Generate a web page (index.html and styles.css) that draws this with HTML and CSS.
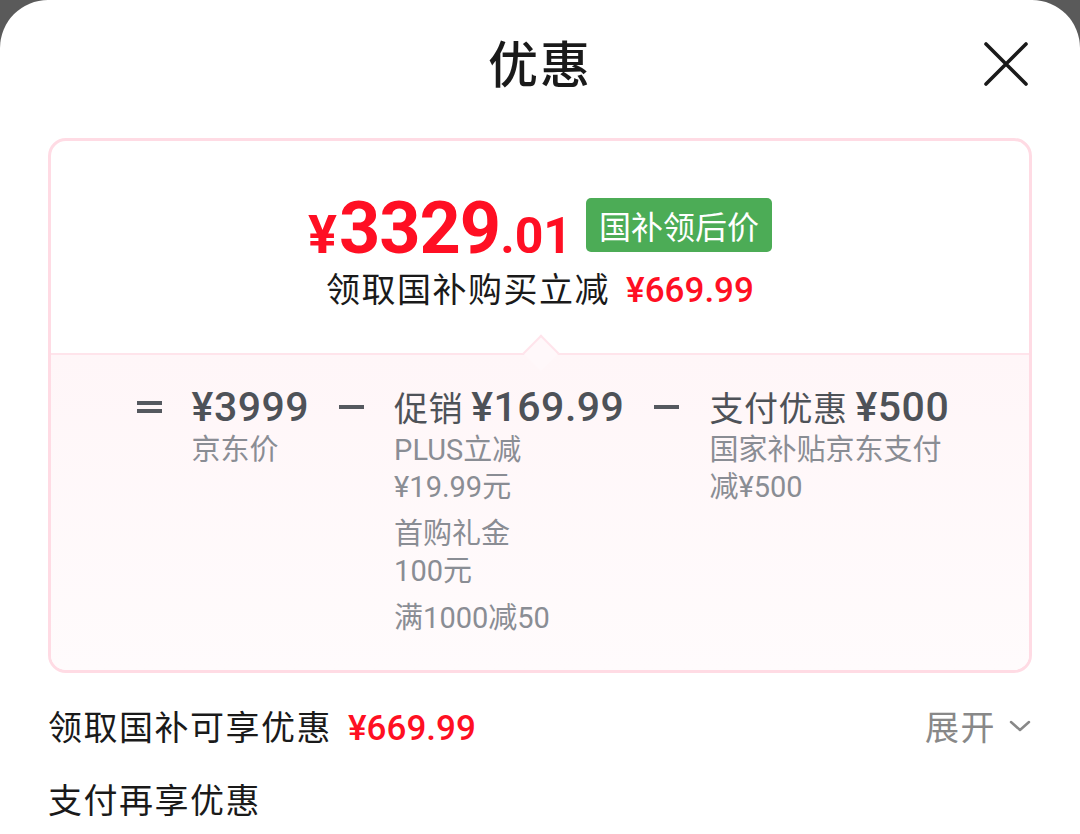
FILE: index.html
```html
<!DOCTYPE html>
<html lang="zh-CN">
<head>
    <meta charset="UTF-8">
    <meta name="viewport" content="width=device-width, initial-scale=1.0">
    <title>优惠</title>
    <link rel="stylesheet" href="styles.css">
</head>
<body>
    <div class="sheet">
        <div class="header">
            <h1>优惠</h1>
            <span class="close">
                <svg width="46" height="46" viewBox="0 0 46 46"><path d="M3 3 L43 43 M43 3 L3 43" stroke="#1a1a1a" stroke-width="3.6" stroke-linecap="round"/></svg>
            </span>
        </div>

        <div class="card">
            <div class="card-top">
                <div class="final-row">
                    <span class="final-price"><span class="yen">¥</span><span class="int">3329</span><span class="dec">.01</span></span>
                    <span class="badge">国补领后价</span>
                </div>
                <p class="saving">领取国补购买立减<span class="red">¥669.99</span></p>
            </div>
            <div class="card-bottom">
                <div class="op"><span class="eq"></span></div>
                <div class="col">
                    <div class="col-title"><span class="num">¥3999</span></div>
                    <div class="col-sub">京东价</div>
                </div>
                <div class="op"><span class="minus"></span></div>
                <div class="col">
                    <div class="col-title">促销 <span class="num">¥169.99</span></div>
                    <div class="col-sub narrow">PLUS立减¥19.99元</div>
                    <div class="col-sub narrow">首购礼金100元</div>
                    <div class="col-sub narrow">满1000减50</div>
                </div>
                <div class="op"><span class="minus"></span></div>
                <div class="col">
                    <div class="col-title">支付优惠 <span class="num">¥500</span></div>
                    <div class="col-sub wide">国家补贴京东支付减¥500</div>
                </div>
            </div>
        </div>

        <div class="row first">
            <span>领取国补可享优惠<span class="red">¥669.99</span></span>
            <span class="more">展开
                <svg width="24" height="14" viewBox="0 0 24 14"><path d="M3 3 L12 11 L21 3" fill="none" stroke="#888" stroke-width="2.5" stroke-linecap="round" stroke-linejoin="round"/></svg>
            </span>
        </div>
        <div class="row">
            <span>支付再享优惠</span>
        </div>
    </div>
</body>
</html>
```

FILE: styles.css
```css
body {
    margin: 0;
    background-color: #5a5a5a;
    font-family: "Noto Sans CJK SC", sans-serif;
    color: #1a1a1a;
}
.sheet {
    background-color: white;
    border-radius: 48px 48px 0 0;
    height: 834px;
    overflow: hidden;
    padding: 0 48px;
}
.header {
    position: relative;
    height: 130px;
    display: flex;
    align-items: center;
    justify-content: center;
}
.header h1 {
    margin: 0;
    font-size: 50px;
    font-weight: 500;
    letter-spacing: 2px;
    line-height: 1;
    margin-top: -8px;
}
.close {
    position: absolute;
    right: 3px;
    top: 41px;
    display: flex;
}
.card {
    border: 3px solid #ffdbe4;
    border-radius: 18px;
    overflow: hidden;
    margin-top: 8px;
}
.card-top {
    height: 212px;
    display: flex;
    flex-direction: column;
    align-items: center;
    position: relative;
    border-bottom: 2px solid #ffe4eb;
}
.card-top::after {
    content: "";
    position: absolute;
    left: 477px;
    bottom: -13px;
    width: 24px;
    height: 24px;
    background-color: #fff8fa;
    border-left: 2px solid #ffe4eb;
    border-top: 2px solid #ffe4eb;
    transform: rotate(45deg);
}
.final-row {
    display: flex;
    align-items: center;
    gap: 14px;
    margin-top: 52px;
}
.final-price {
    color: #ff0f23;
    font-family: Roboto, "Noto Sans CJK SC", sans-serif;
    font-weight: 700;
    line-height: 1;
    display: flex;
    align-items: baseline;
}
.yen {
    font-size: 54px;
    margin-right: 2px;
}
.int {
    font-size: 72px;
    letter-spacing: -1px;
}
.dec {
    font-size: 50px;
}
.badge {
    background-color: #4cac56;
    color: white;
    font-size: 32px;
    line-height: 54px;
    padding: 0 13px;
    border-radius: 5px;
    margin-top: -8px;
}
.saving {
    margin: 5px 0 0;
    font-size: 34px;
    letter-spacing: 1.5px;
    line-height: 36px;
}
.red {
    color: #ff0f23;
    font-family: Roboto, "Noto Sans CJK SC", sans-serif;
    font-weight: 500;
    font-size: 35px;
    letter-spacing: 0;
    margin-left: 16px;
}
.card-bottom {
    background: linear-gradient(#fff6f8, #fffbfc);
    display: flex;
    justify-content: center;
    gap: 30px;
    padding: 27px 0 30px 6px;
    height: 315px;
    box-sizing: border-box;
}
.op {
    width: 25px;
    height: 50px;
    display: flex;
    align-items: center;
}
.eq,
.minus {
    display: block;
    width: 25px;
    height: 4px;
    background-color: #55595f;
}
.eq {
    box-shadow: 0 -8px 0 #55595f;
    margin-top: 8px;
}
.col-title {
    font-size: 34px;
    letter-spacing: 0.5px;
    color: #4e5258;
    line-height: 50px;
    white-space: nowrap;
}
.num {
    font-family: Roboto, sans-serif;
    font-size: 41px;
    font-weight: 500;
    letter-spacing: 0.5px;
    margin-left: 2px;
}
.col-title .num:first-child {
    margin-left: 0;
}
.col-sub {
    font-family: Roboto, "Noto Sans CJK SC", sans-serif;
    font-size: 29px;
    color: #8a8d94;
    line-height: 37px;
    margin-bottom: 10px;
}
.narrow {
    width: 158px;
}
.wide {
    width: 240px;
}
.row {
    display: flex;
    justify-content: space-between;
    align-items: center;
    font-size: 34px;
    letter-spacing: 1.5px;
    height: 73px;
}
.row.first {
    margin-top: 16px;
}
.more {
    color: #888;
    display: flex;
    align-items: center;
    gap: 12px;
}
```
